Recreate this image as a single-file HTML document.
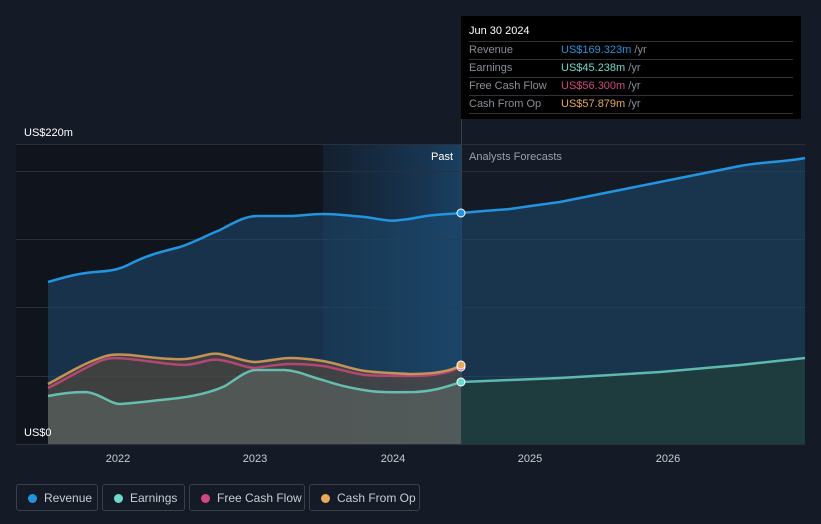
<!DOCTYPE html><html><head><style>
body{margin:0;width:821px;height:524px;background:#151b26;font-family:"Liberation Sans",sans-serif;overflow:hidden;position:relative}
.tt{position:absolute;left:461px;top:16px;width:340px;height:103px;background:#000;color:#fff;font-size:11px}
.tt .h{padding:9px 8px 4px;font-size:11px}
.tt .r{margin:0 8px;border-top:1px solid #333;height:17px;line-height:17px;color:#8a8f98}
.tt .r span{position:absolute;left:100px}
.tt .r i{font-style:normal;color:#8a8f98}
.leg{position:absolute;top:484px;height:27px;border:1px solid #3a404a;border-radius:3px;color:#c8ccd2;font-size:12px;line-height:27px;box-sizing:border-box;padding-left:27px}
.leg:before{content:"";position:absolute;left:11px;top:9px;width:9px;height:9px;border-radius:50%;background:var(--c)}
</style></head><body>
<svg width="821" height="524" style="position:absolute;left:0;top:0">
<defs><linearGradient id="hb" x1="0" x2="1"><stop offset="0" stop-color="#1a3a5a" stop-opacity=".3"/><stop offset="1" stop-color="#1d4a72" stop-opacity=".8"/></linearGradient></defs>
<rect x="16" y="144" width="445" height="300" fill="#10151d"/>
<rect x="323" y="144" width="138" height="300" fill="url(#hb)"/>
<g stroke="#2a303a" stroke-width="1"><line x1="16" y1="144.5" x2="805" y2="144.5"/><line x1="16" y1="171.5" x2="805" y2="171.5"/><line x1="16" y1="239.5" x2="805" y2="239.5"/><line x1="16" y1="307.5" x2="805" y2="307.5"/><line x1="16" y1="376.5" x2="805" y2="376.5"/><line x1="16" y1="444.5" x2="805" y2="444.5"/></g>
<line x1="461.5" y1="16" x2="461.5" y2="444" stroke="#3a404a"/>
<path d="M48,282 C65,277 80,273 95,272 C110,271 118,270 130,264 C145,256 160,252 180,247 C195,242 205,236 220,230 C235,222 245,216 258,216 L290,216 C300,216 310,214 323,214 C340,214 350,216 365,217 C380,219 390,222 400,220 C415,219 420,216 435,215 C445,214 452,214 461,213 C480,211 495,210 510,209 C530,206 545,204 560,202 C580,198 600,194 620,190 C640,186 660,182 680,178 C700,174 720,170 740,166 C760,162 785,162 805,158 L805,444 L48,444Z" fill="#1e4b70" opacity=".55"/>
<path d="M461,382 L560,378 L660,372 L740,365 L805,358 L805,444 L461,444Z" fill="#1f3d3b" opacity=".8"/>
<path d="M48,384 C65,375 80,365 100,358 C110,354 118,354 130,355 C150,357 170,360 185,359 C200,358 210,352 220,354 C235,357 245,362 255,362 C270,361 280,358 290,358 C305,358 315,360 323,361 C340,364 350,369 365,371 C380,373 395,373 410,374 C430,374 450,372 461,365 L461,444 L48,444Z" fill="#5a4a3a" opacity=".6"/>
<path d="M48,396 C60,394 70,392 85,392 C100,393 110,404 120,404 C135,403 150,401 170,399 C190,397 210,393 225,386 C235,380 245,371 255,370 L285,370 C300,371 310,377 323,380 C340,386 355,389 370,391 C385,393 400,392 415,392 C435,391 445,387 461,382 L461,444 L48,444Z" fill="#5f6a66" opacity=".55"/>
<g fill="none" stroke-width="2.5">
<path d="M48,282 C65,277 80,273 95,272 C110,271 118,270 130,264 C145,256 160,252 180,247 C195,242 205,236 220,230 C235,222 245,216 258,216 L290,216 C300,216 310,214 323,214 C340,214 350,216 365,217 C380,219 390,222 400,220 C415,219 420,216 435,215 C445,214 452,214 461,213 C480,211 495,210 510,209 C530,206 545,204 560,202 C580,198 600,194 620,190 C640,186 660,182 680,178 C700,174 720,170 740,166 C760,162 785,162 805,158" stroke="#2394df"/>
<path d="M48,396 C60,394 70,392 85,392 C100,393 110,404 120,404 C135,403 150,401 170,399 C190,397 210,393 225,386 C235,380 245,371 255,370 L285,370 C300,371 310,377 323,380 C340,386 355,389 370,391 C385,393 400,392 415,392 C435,391 445,387 461,382 L560,378 L660,372 L740,365 L805,358" stroke="#6ed9c9" opacity=".8"/>
<path d="M48,388 C65,380 80,370 100,361 C110,357 118,358 130,359 C150,361 170,365 185,365 C200,364 210,358 220,360 C235,362 245,368 255,368 C270,366 280,364 290,364 C305,364 315,365 323,366 C340,369 350,373 365,375 C380,376 395,376 410,376 C430,376 450,374 461,366" stroke="#d0487f" opacity=".8"/>
<path d="M48,384 C65,375 80,365 100,358 C110,354 118,354 130,355 C150,357 170,360 185,359 C200,358 210,352 220,354 C235,357 245,362 255,362 C270,361 280,358 290,358 C305,358 315,360 323,361 C340,364 350,369 365,371 C380,373 395,373 410,374 C430,374 450,372 461,365" stroke="#e9a95a" opacity=".8"/>
</g>
<circle cx="461" cy="213" r="4" fill="#2394df" stroke="#fff" stroke-width="1"/>
<circle cx="461" cy="382" r="4" fill="#6ed9c9" stroke="#fff" stroke-width="1"/>
<circle cx="461" cy="367" r="4" fill="#d0487f" stroke="#fff" stroke-width="1"/>
<circle cx="461" cy="365" r="4" fill="#e9a95a" stroke="#fff" stroke-width="1"/>
<g font-size="11" fill="#fff" font-family="Liberation Sans"><text x="24" y="136">US$220m</text><text x="24" y="436">US$0</text></g>
<text x="453" y="160" font-size="11" fill="#fff" text-anchor="end">Past</text>
<text x="469" y="160" font-size="11" fill="#9aa0a8">Analysts Forecasts</text>
<g font-size="11" fill="#c8ccd2" text-anchor="middle"><text x="118" y="462">2022</text><text x="255" y="462">2023</text><text x="393" y="462">2024</text><text x="530" y="462">2025</text><text x="668" y="462">2026</text></g>
</svg>
<div class="tt"><div class="h">Jun 30 2024</div>
<div class="r">Revenue<span style="color:#2394df">US$169.323m <i>/yr</i></span></div>
<div class="r">Earnings<span style="color:#6ed9c9">US$45.238m <i>/yr</i></span></div>
<div class="r">Free Cash Flow<span style="color:#d0487f">US$56.300m <i>/yr</i></span></div>
<div class="r" style="border-bottom:1px solid #333">Cash From Op<span style="color:#e9a95a">US$57.879m <i>/yr</i></span></div></div>
<div class="leg" style="--c:#2394df;left:16px;width:82px">Revenue</div>
<div class="leg" style="--c:#6ed9c9;left:102px;width:83px">Earnings</div>
<div class="leg" style="--c:#d0487f;left:189px;width:116px">Free Cash Flow</div>
<div class="leg" style="--c:#e9a95a;left:309px;width:111px">Cash From Op</div>
</body></html>
